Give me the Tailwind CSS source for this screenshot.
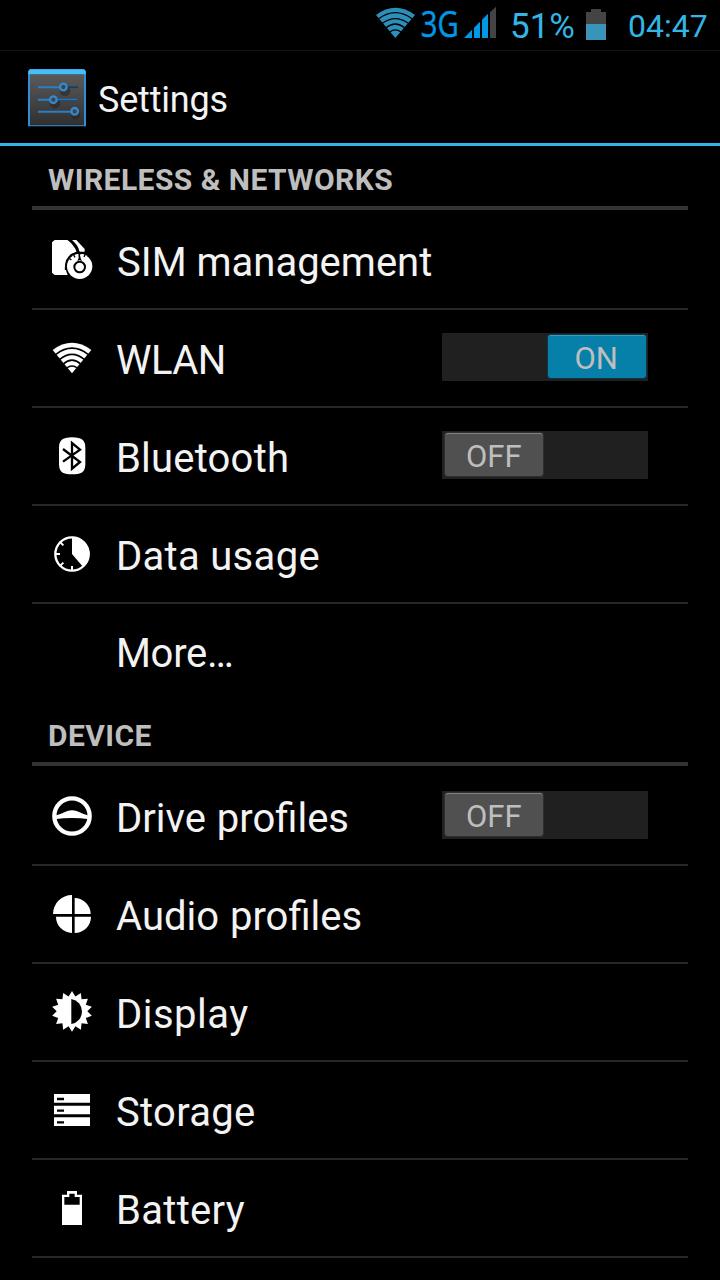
<!DOCTYPE html>
<html lang="en">
<head>
<meta charset="utf-8">
<title>Settings</title>
<script src="https://cdn.jsdelivr.net/npm/@tailwindcss/browser@4"></script>
</head>
<body class="bg-black">
<div class="w-[720px] h-[1280px] overflow-hidden bg-black font-['Roboto',sans-serif] text-[#f3f3f3] flex flex-col">
  <header class="h-[51px] shrink-0 border-b border-[#141414] flex items-start text-[#33b5e5] whitespace-nowrap">
    <svg class="w-[140px] h-[50px] ml-[370px] shrink-0" viewBox="30 0 420 150">
      <clipPath id="fan"><path d="M106 114L44 44V10H170V44Z"/></clipPath>
      <path d="M106 114L48 45Q106 2 165 45Z" fill="#2b8fb9"/>
      <g clip-path="url(#fan)" fill="none" stroke="#000" stroke-width="4"><path d="M56 56Q106 20 156 56M67 70Q106 42 145 70M78 83Q106 61 134 83M89 96Q106 83 123 96"/></g>
      <text x="182" y="110" font-family="Open Sans, sans-serif" font-size="108" textLength="114" lengthAdjust="spacingAndGlyphs" fill="#0099e5" stroke="#0099e5" stroke-width="1.5">3G</text>
      <path d="M312 114L336 89V114ZM342 114V83L360 65V114ZM366 114V59L384 41V114Z" fill="#0099e5"/>
      <path d="M390 114V37L408 20V114Z" fill="#444"/>
    </svg>
    <span class="w-[69px] text-[35px] leading-[54px]">51%</span>
    <svg class="w-[22px] h-[50px] ml-[6px] shrink-0" viewBox="675 0 66 150"><path d="M678 72V36H693V27H723V36H738V72Z" fill="#444"/><path d="M678 72H738V120H678Z" fill="#3a94b9"/></svg>
    <span class="ml-[21px] text-[32px] leading-[52px]">04:47</span>
  </header>
  <div class="h-[95px] shrink-0 border-b-3 border-[#33b5e5] flex items-center pl-[28px]">
    <svg class="w-[58px] h-[58px] mt-[1px]" viewBox="84 56 174 174">
      <defs><linearGradient id="plate" x1="0" x2="0" y1="0" y2="1"><stop offset="0" stop-color="#5a5a5a"/><stop offset="1" stop-color="#303030"/></linearGradient></defs>
      <path d="M90 57H252L258 63V228H84V63Z" fill="#2d8fd8"/>
      <path d="M90 57H252L257 62V72H85V62Z" fill="#43c0fa"/>
      <path d="M90 72H252V225H90Z" fill="url(#plate)"/>
      <g fill="#222" opacity=".5"><circle cx="195" cy="121" r="16"/><circle cx="165" cy="158" r="16"/><circle cx="227" cy="193" r="14"/></g>
      <path d="M190 111H234M160 148H234" stroke="#1c3d5c" stroke-width="6"/>
      <path d="M114 111H190M114 148H160M174 148H232M114 184H224" stroke="#2980c8" stroke-width="6"/>
      <path d="M174 150H232" stroke="#1d446a" stroke-width="3"/>
      <g fill="#444" stroke="#3189d1" stroke-width="7"><circle cx="190" cy="110" r="10"/><circle cx="160" cy="148" r="10"/><circle cx="224" cy="183" r="10"/></g>
    </svg>
    <h1 class="ml-[12px] mt-[5px] text-[36px] leading-[42px] tracking-[-0.2px]">Settings</h1>
  </div>
  <main class="px-8 text-[40px]">
    <h2 class="h-[64px] mb-[2px] border-b-4 border-[#333] pl-4 pt-[5px] text-[30px] leading-[57px] font-bold tracking-[0.45px] text-[#bebebe]">WIRELESS &amp; NETWORKS</h2>

    <div class="h-[98px] border-b-2 border-[#272727] flex items-center pl-4">
      <svg class="size-12" viewBox="48 48 144 144">
        <path d="M68 60H109Q120 71 130 86L134 97Q105 104 101 139Q101 154 107 165H68L60 158V67Z" fill="#fff"/>
        <path d="M120 60H133L158 87V98H142Q139 77 120 60Z" fill="#fff"/>
        <circle cx="143" cy="139" r="38" fill="#fff"/>
        <path d="M109 58Q136 76 138 94L142 99" fill="none" stroke="#000" stroke-width="7"/>
        <path d="M101 150Q99 103 138 98H160" fill="none" stroke="#000" stroke-width="5"/>
        <circle cx="143" cy="141" r="16" fill="none" stroke="#000" stroke-width="6"/>
        <path d="M139 100H148L144 105L146 115L150 124L143 120L136 124L140 114Z" fill="#000"/>
        <path d="M125 105L129 112M159 104L156 111M113 116L118 120" stroke="#000" stroke-width="4"/>
      </svg>
      <span class="ml-[21px] mt-1.5 leading-[48px]">SIM management</span>
    </div>
    <div class="h-[98px] border-b-2 border-[#272727] flex items-center pl-4">
      <svg class="size-12" viewBox="48 42 144 144">
        <path d="M120 160L62 90Q120 47 178 90Z" fill="#fff"/>
        <path d="M72 103Q120 66 168 103M83 118Q120 88 157 118M94 132Q120 109 146 132" fill="none" stroke="#000" stroke-width="5"/>
        <path d="M104 144Q120 132 136 144" fill="none" stroke="#000" stroke-width="4"/>
      </svg>
      <span class="ml-5 mt-1.5 leading-[48px] tracking-[-0.6px]">WLAN</span>
      <div class="ml-auto mr-10 mb-[2px] w-[206px] h-[48px] bg-[#202020] flex justify-end pt-[2px] pr-[2.5px]">
        <div class="w-[97.5px] h-[43px] rounded-[3px] bg-[#067fa9] border-t border-[#369fc2] shadow-[0_0_1px_1px_#143743] text-center text-[31px] leading-[45px] pr-px text-[#bebebe]">ON</div>
      </div>
    </div>
    <div class="h-[98px] border-b-2 border-[#272727] flex items-center pl-4">
      <svg class="size-12" viewBox="48 48 144 144">
        <path d="M101 66Q120 62 140 66Q160 70 160 94V146Q160 169 140 173Q120 176 101 173Q81 169 81 146V94Q81 70 101 66Z" fill="#fff"/>
        <path d="M93 99L144 138L120 158V81L144 101L93 137" fill="none" stroke="#000" stroke-width="7"/>
      </svg>
      <span class="ml-5 mt-1.5 leading-[48px] tracking-[0.2px]">Bluetooth</span>
      <div class="ml-auto mr-10 mb-[2px] w-[206px] h-[48px] bg-[#202020] flex pt-[2px] pl-[3px]">
        <div class="w-[97.5px] h-[43px] rounded-[3px] bg-[#505050] border-t border-[#838383] shadow-[0_0_1px_1px_#303030] text-center text-[31px] leading-[45px] text-[#bebebe]">OFF</div>
      </div>
    </div>
    <div class="h-[98px] border-b-2 border-[#272727] flex items-center pl-4">
      <svg class="size-12" viewBox="48 48 144 144">
        <circle cx="120" cy="120" r="50" fill="none" stroke="#fff" stroke-width="7"/>
        <path d="M120 120V68A52 52 0 0 1 154 160Z" fill="#fff"/>
        <path d="M70 120H84M83 83L94 94M83 157L94 146M120 170V156" stroke="#fff" stroke-width="6"/>
      </svg>
      <span class="ml-5 mt-1.5 leading-[48px] tracking-[0.3px]">Data usage</span>
    </div>
    <div class="h-[98px] flex items-center pl-[84px]">
      <span class="mt-0.5 leading-[48px] tracking-[-0.3px]">More…</span>
    </div>

    <h2 class="h-[64px] mb-[2px] border-b-4 border-[#333] pl-4 pt-[5px] text-[30px] leading-[57px] font-bold tracking-[0.45px] text-[#bebebe]">DEVICE</h2>

    <div class="h-[98px] border-b-2 border-[#272727] flex items-center pl-4">
      <svg class="size-12" viewBox="48 48 144 144">
        <circle cx="120" cy="120" r="53" fill="none" stroke="#fff" stroke-width="13"/>
        <path d="M68 119Q88 114 106 105Q120 101 134 105Q152 114 172 119V130Q120 122 68 130Z" fill="#fff"/>
      </svg>
      <span class="ml-5 mt-1.5 leading-[48px]">Drive<span class="ml-[1px]"> profiles</span></span>
      <div class="ml-auto mr-10 mb-[2px] w-[206px] h-[48px] bg-[#202020] flex pt-[2px] pl-[3px]">
        <div class="w-[97.5px] h-[43px] rounded-[3px] bg-[#505050] border-t border-[#838383] shadow-[0_0_1px_1px_#303030] text-center text-[31px] leading-[45px] text-[#bebebe]">OFF</div>
      </div>
    </div>
    <div class="h-[98px] border-b-2 border-[#272727] flex items-center pl-4">
      <svg class="size-12" viewBox="48 48 144 144" fill="#fff">
        <path d="M120 120H63A57 57 0 0 1 120 63ZM128 120V72A49 49 0 0 1 176 120ZM120 128V177A49 49 0 0 1 72 128ZM128 128H177A49 49 0 0 1 128 177Z"/>
      </svg>
      <span class="ml-5 mt-1.5 leading-[48px]">Audio<span class="ml-[1px]"> profiles</span></span>
    </div>
    <div class="h-[98px] border-b-2 border-[#272727] flex items-center pl-4">
      <svg class="size-12" viewBox="48 48 144 144">
        <path id="sun" fill="#fff"/>
        <path d="M118 81A38 38 0 0 1 118 156Z" fill="#000"/>
      </svg>
      <span class="ml-5 mt-1.5 leading-[48px] tracking-[0.5px]">Display</span>
    </div>
    <div class="h-[98px] border-b-2 border-[#272727] flex items-center pl-4">
      <svg class="size-12" viewBox="48 48 144 144">
        <path d="M66 72H174V98H66ZM66 107H174V133H66ZM66 142H174V168H66Z" fill="#fff"/>
        <path d="M75 87H96M75 122H96M75 157H96" stroke="#000" stroke-width="7"/>
      </svg>
      <span class="ml-5 mt-1.5 leading-[48px] tracking-[0.3px]">Storage</span>
    </div>
    <div class="h-[98px] border-b-2 border-[#272727] flex items-center pl-4">
      <svg class="size-12" viewBox="48 48 144 144">
        <path d="M90 171V80H105V69H135V80H150V171Z" fill="#fff"/>
        <path d="M97 110V87H112V77H128V87H143V110Z" fill="#000"/>
      </svg>
      <span class="ml-5 mt-1.5 leading-[48px] tracking-[0.3px]">Battery</span>
    </div>
  </main>
</div>
<script>
  // Fourteen-pointed sun outline
  const points = [];
  for (let i = 0; i < 28; i++) {
    const r = i % 2 ? 46 : 61, a = i * Math.PI / 14;
    points.push((120 + r * Math.sin(a)).toFixed(1) + ' ' + (118 - r * Math.cos(a)).toFixed(1));
  }
  document.getElementById('sun').setAttribute('d', 'M' + points.join('L') + 'Z');
</script>
</body>
</html>
